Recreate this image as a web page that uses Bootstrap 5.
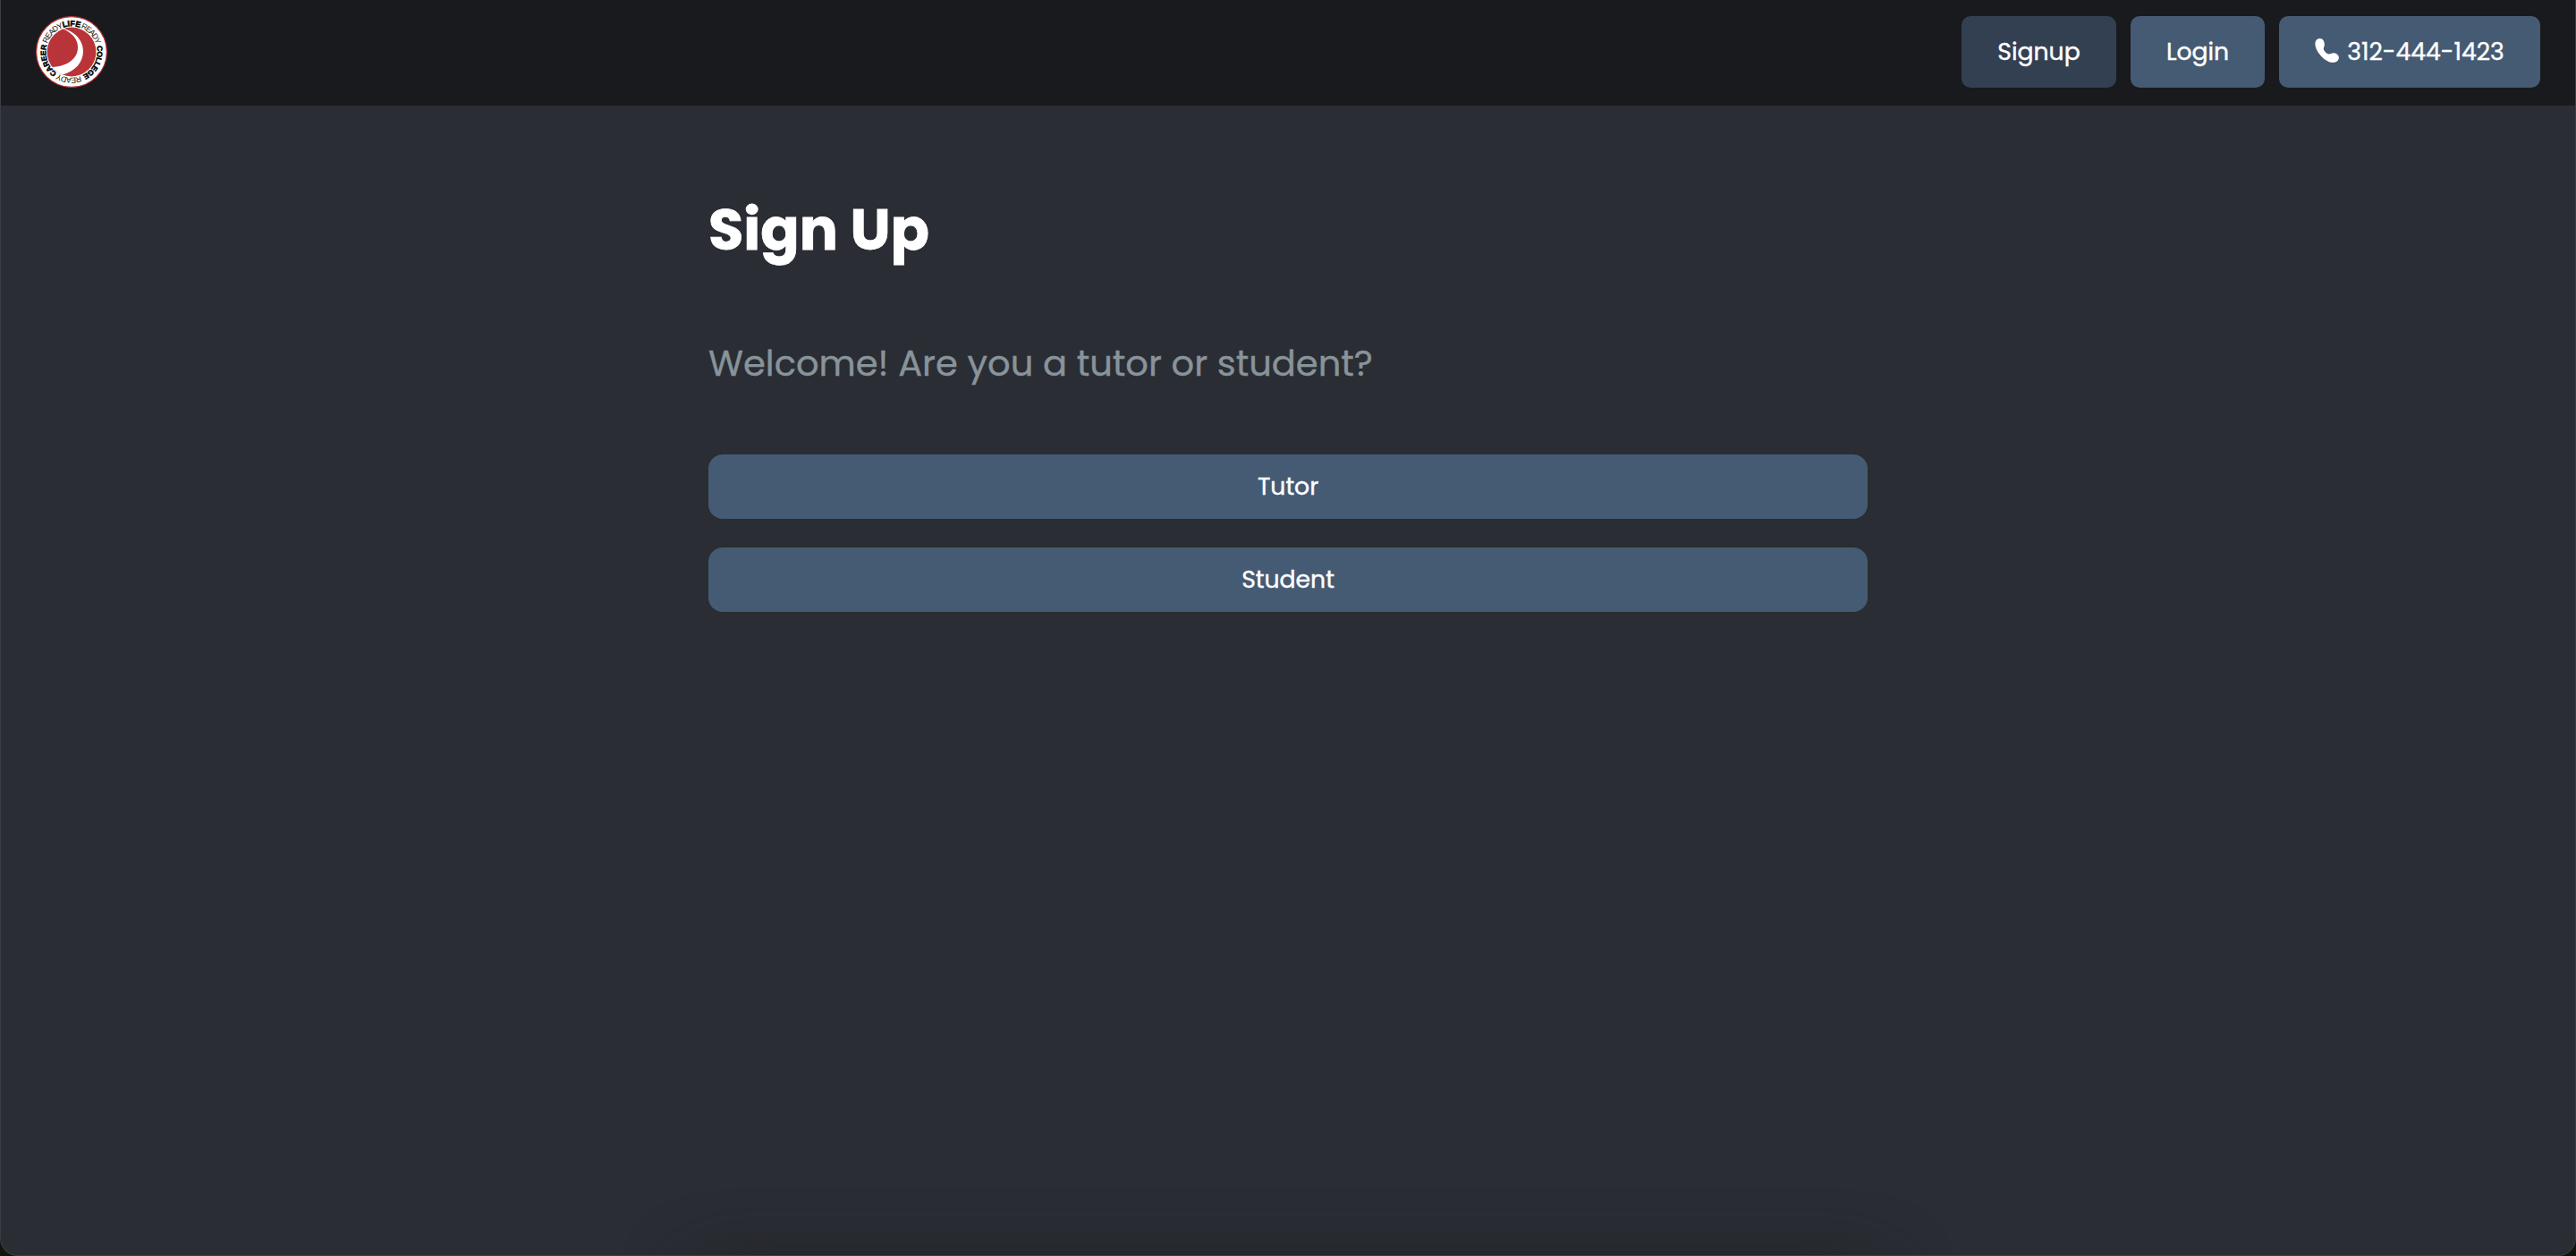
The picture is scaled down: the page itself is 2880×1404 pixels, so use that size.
<!DOCTYPE html>
<html lang="en">
<head>
  <meta charset="UTF-8" />
  <title>Sign Up</title>
  <meta name="viewport" content="width=device-width, initial-scale=1.0"/>
  <link href="https://cdn.jsdelivr.net/npm/bootstrap@5.3.0/dist/css/bootstrap.min.css" rel="stylesheet" />
  <style>
    html {
      background: #14140c;
    }
    body {
      background: #14140c;
      color: #fff;
      font-family: 'Poppins', 'Inter', sans-serif;
      font-size: 26.67px;
      -webkit-text-stroke: .4px currentColor;
    }
    .app-window {
      height: 1404px;
      background: #2a2d34;
      border: solid #3b3e45;
      border-width: 0 1px 1px;
      border-radius: 0 0 20px 20px;
    }
    /* soft shadow rising from below the bottom edge */
    .app-window::after {
      content: '';
      position: absolute;
      left: 770px;
      right: 770px;
      top: calc(100% + 14px);
      height: 100px;
      border-radius: 40px;
      box-shadow: 0 0 76px rgba(30, 31, 31, .8);
    }
    .topbar {
      height: 118px;
      background: #191a1d;
      padding: 18px 39px 20px;
    }
    .brand-logo {
      width: 80px;
      height: 80px;
      -webkit-text-stroke: 0;
    }
    .btn-steel {
      --bs-btn-color: #fff;
      --bs-btn-bg: #455b73;
      --bs-btn-hover-color: #fff;
      --bs-btn-hover-bg: #334052;
      --bs-btn-active-color: #fff;
      --bs-btn-active-bg: #334052;
      --bs-btn-border-width: 0;
      --bs-btn-font-size: 26.67px;
      --bs-btn-border-radius: 16px;
      height: 72px;
      -webkit-text-stroke: .4px currentColor;
    }
    .topbar .btn-steel {
      --bs-btn-border-radius: 10px;
      height: 80px;
    }
    .btn-signup { width: 173px; }
    .btn-login { width: 150px; }
    .btn-phone {
      width: 292px;
      gap: 9px;
    }
    .signup-box {
      width: 1296px;
      padding-top: 91px;
    }
    .signup-title {
      font-size: 64px;
      line-height: 96px;
      font-weight: 700;
      margin-bottom: 71px;
      -webkit-text-stroke-width: .8px;
    }
    .signup-lead {
      font-size: 40px;
      line-height: 60px;
      color: #88939a;
      margin-bottom: 72px;
    }
  </style>
</head>
<body>
  <div class="app-window position-relative overflow-hidden">
    <nav class="topbar d-flex align-items-start justify-content-between">
      <a href="#" class="d-block" aria-label="Home">
        <svg class="brand-logo d-block" viewBox="0 0 80 80" font-family="Liberation Sans, sans-serif">
          <defs>
            <path id="ring" d="M11.3 40A28.7 28.7 0 0 1 68.7 40" />
            <clipPath id="disc"><circle cx="40" cy="40" r="27.4" /></clipPath>
          </defs>
          <circle cx="40" cy="40" r="39.4" fill="#fff" stroke="#b93238" stroke-width="1.2" />
          <circle cx="40" cy="40" r="27.4" fill="#b93439" />
          <path clip-path="url(#disc)" fill="#fff" d="M29 13.5C42 16 53 26 53 39C53 52 44 61.5 30 65.5L24 70L10 57C31 58.5 47 50 47 35C47 26 41 18.5 29 13.5Z" />
          <g text-anchor="middle">
            <g fill="#000" stroke="#000" stroke-width=".5" font-weight="700">
              <text font-size="9"><textPath href="#ring" startOffset="50%">LIFE</textPath></text>
              <text transform="rotate(115.5 40 40)" font-size="8.4" letter-spacing="-.3"><textPath href="#ring" startOffset="50%">COLLEGE</textPath></text>
              <text transform="rotate(250 40 40)" font-size="8.4"><textPath href="#ring" startOffset="50%">CAREER</textPath></text>
            </g>
            <g fill="#111" font-size="8.8" letter-spacing="-1">
              <text transform="rotate(46 40 40)"><textPath href="#ring" startOffset="50%">READY</textPath></text>
              <text transform="rotate(185 40 40)"><textPath href="#ring" startOffset="50%">READY</textPath></text>
              <text transform="rotate(314 40 40)"><textPath href="#ring" startOffset="50%">READY</textPath></text>
            </g>
          </g>
        </svg>
      </a>
      <div class="d-flex gap-3">
        <a href="#" class="btn btn-steel btn-signup active p-0 d-flex align-items-center justify-content-center">Signup</a>
        <a href="#" class="btn btn-steel btn-login p-0 d-flex align-items-center justify-content-center">Login</a>
        <a href="#" class="btn btn-steel btn-phone p-0 d-flex align-items-center justify-content-center">
          <svg class="mb-1" width="27" height="27" viewBox="0 0 27 27" fill="#fff" aria-hidden="true">
            <path d="M.4 6C.4 2 3 0 5.8 0C9 0 11 3.5 10.8 7C10.7 9 9.8 10.3 9.8 11.5C10 14 13 17 15.8 17.5C17 17.5 18.5 16.2 21 16.2C24 16.2 27 18.7 26.9 21.6C26.7 25 24 27 20.5 27C11 27 .4 14 .4 6Z" />
          </svg>
          <span>312-444-1423</span>
        </a>
      </div>
    </nav>

    <main class="signup-box mx-auto">
      <h1 class="signup-title">Sign Up</h1>
      <p class="signup-lead">Welcome! Are you a tutor or student?</p>
      <div class="d-grid">
        <button class="btn btn-steel mb-4" type="button">Tutor</button>
        <button class="btn btn-steel mt-2" type="button">Student</button>
      </div>
    </main>
  </div>
  <script src="https://cdn.jsdelivr.net/npm/bootstrap@5.3.0/dist/js/bootstrap.bundle.min.js"></script>
</body>
</html>
